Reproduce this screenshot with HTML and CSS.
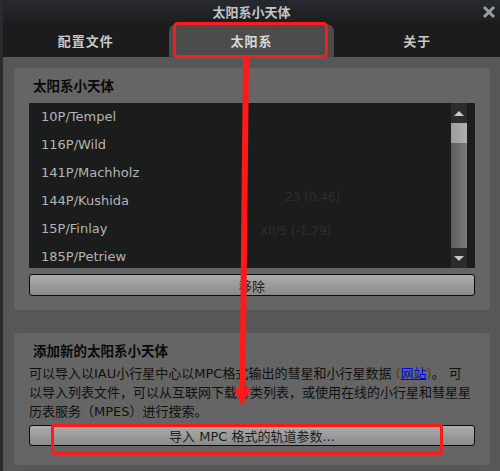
FILE: index.html
```html
<!DOCTYPE html>
<html lang="zh">

<head>
    <meta charset="UTF-8">
    <title>太阳系小天体</title>
    <link rel="stylesheet" href="styles.css">
</head>

<body>
    <div class="dialog">
        <div class="titlebar">
            <span class="title">太阳系小天体</span>
            <svg class="close" width="14" height="14" viewBox="0 0 14 14">
                <path d="M2 2 L12 12 M12 2 L2 12" stroke="#9c9c9c" stroke-width="3" />
            </svg>
        </div>

        <div class="tabs">
            <div class="tab">配置文件</div>
            <div class="tab active">太阳系</div>
            <div class="tab">关于</div>
        </div>

        <div class="content">
            <div class="panel panel-list">
                <div class="panel-title">太阳系小天体</div>
                <div class="listbox">
                    <ul class="items">
                        <li>10P/Tempel</li>
                        <li>116P/Wild</li>
                        <li>141P/Machholz</li>
                        <li>144P/Kushida</li>
                        <li>15P/Finlay</li>
                        <li>185P/Petriew</li>
                    </ul>
                    <div class="scrollbar">
                        <div class="sb-btn"><span class="tri-up"></span></div>
                        <div class="sb-handle"></div>
                        <div class="sb-track"></div>
                        <div class="sb-btn"><span class="tri-down"></span></div>
                    </div>
                    <!-- sky labels showing through -->
                    <span class="sky sky1">23 (0.46)</span>
                    <span class="sky sky2">XII/5 (-1.79)</span>
                </div>
                <button class="btn">移除</button>
            </div>

            <div class="panel panel-add">
                <div class="panel-title">添加新的太阳系小天体</div>
                <p class="desc">可以导入以IAU小行星中心以MPC格式输出的彗星和小行星数据 <span class="paren">(</span><a href="#">网站</a><span class="paren">)</span>。 可<br>以导入列表文件，可以从互联网下载分类列表，或使用在线的小行星和彗星星<br>历表服务（MPES）进行搜索。</p>
                <button class="btn">导入 MPC 格式的轨道参数...</button>
            </div>
        </div>
    </div>

    <!-- annotation overlay -->
    <svg class="marks" width="500" height="471" viewBox="0 0 500 471">
        <rect x="174.5" y="23.5" width="152" height="33" rx="3" fill="none" stroke="#ff1a1a" stroke-width="3" />
        <line x1="246" y1="57" x2="242.5" y2="392" stroke="#ff1a1a" stroke-width="6" />
        <polygon points="234,388 251,388 242,406" fill="#ff1a1a" />
        <rect x="52.5" y="425.5" width="389" height="28" rx="2" fill="none" stroke="#ff1a1a" stroke-width="3" />
    </svg>
</body>

</html>
```

FILE: styles.css
```css
* {
    box-sizing: border-box;
}

body {
    margin: 0;
    width: 500px;
    height: 471px;
    overflow: hidden;
    background-color: #2a2b30;
    font-family: "DejaVu Sans", "Noto Sans CJK SC", sans-serif;
    font-size: 13px;
}

.dialog {
    margin-left: 3px;
    width: 497px;
    height: 471px;
    background-color: #575757;
    display: flex;
    flex-direction: column;
}

.titlebar {
    height: 22px;
    background: linear-gradient(#262a2f, #1d1e20);
    display: flex;
    align-items: center;
    justify-content: center;
    position: relative;
}

.title {
    color: #c4c4c4;
    font-weight: bold;
    font-size: 13px;
    font-family: "Noto Sans CJK SC", sans-serif;
}

.close {
    position: absolute;
    right: 4px;
    top: 5px;
}

.tabs {
    height: 35px;
    background-color: #1c1c1c;
    display: flex;
    align-items: flex-end;
}

.tab {
    flex: 1;
    height: 33px;
    display: flex;
    align-items: center;
    justify-content: center;
    color: #c8c8c8;
    font-weight: bold;
    font-size: 13px;
    font-family: "Noto Sans CJK SC", sans-serif;
    letter-spacing: 1px;
}

.tab.active {
    background-color: #4c4c4c;
    border-radius: 8px 8px 0 0;
    color: #dadada;
}

.content {
    flex: 1;
    padding: 11px 10px 0 11px;
    display: flex;
    flex-direction: column;
    gap: 23px;
}

.panel {
    background-color: #656565;
    border-radius: 4px;
    padding: 8px 15px 0 15px;
}

.panel-list {
    height: 242px;
}

.panel-add {
    height: 132px;
}

.panel-title {
    color: #0a0a0a;
    font-weight: bold;
    font-size: 13.5px;
    font-family: "Noto Sans CJK SC", sans-serif;
    line-height: 18px;
    padding-left: 4px;
    margin-bottom: 9px;
}

.listbox {
    height: 165px;
    background-color: #1b1c1c;
    display: flex;
    position: relative;
    overflow: hidden;
    padding-right: 8px;
}

.items {
    list-style: none;
    margin: 0;
    padding: 0 0 0 12px;
    flex: 1;
    position: relative;
    z-index: 1;
}

.items li {
    height: 28px;
    line-height: 28px;
    color: #b4b4b4;
    font-size: 13px;
}

.scrollbar {
    width: 16px;
    display: flex;
    flex-direction: column;
    position: relative;
    z-index: 1;
}

.sb-btn {
    height: 20px;
    background-color: #2b2c2d;
    display: flex;
    align-items: center;
    justify-content: center;
}

.sb-handle {
    height: 20px;
    background: linear-gradient(90deg, #9c9c9c, #b0b0b0);
}

.sb-track {
    flex: 1;
    background: linear-gradient(90deg, #5e5e5e, #7a7a7a);
}

.tri-up,
.tri-down {
    width: 0;
    height: 0;
    border-left: 5px solid transparent;
    border-right: 5px solid transparent;
}

.tri-up {
    border-bottom: 5px solid #c8c8c8;
}

.tri-down {
    border-top: 5px solid #c8c8c8;
}

.sky {
    position: absolute;
    color: #2c2e2e;
    font-size: 12px;
}

.sky1 {
    left: 256px;
    top: 87px;
}

.sky2 {
    left: 231px;
    top: 121px;
}

.btn {
    display: block;
    width: 100%;
    margin-top: 6px;
    height: 22px;
    border: 1px solid #0c0c0c;
    border-radius: 3px;
    background: linear-gradient(#adadad, #8a8a8a);
    color: #1c1c1c;
    font-size: 13px;
    font-family: "DejaVu Sans", "Noto Sans CJK SC", sans-serif;
    padding: 0;
}

.desc {
    margin: -4px 0 0 0;
    color: #101010;
    font-size: 13px;
    line-height: 19px;
    white-space: nowrap;
}

.desc a {
    color: #0000ee;
    text-decoration: underline;
}

.paren {
    color: #5a3812;
}

.panel-add .btn {
    height: 21px;
    margin-top: 4px;
}

.marks {
    position: absolute;
    left: 0;
    top: 0;
    pointer-events: none;
}
```
